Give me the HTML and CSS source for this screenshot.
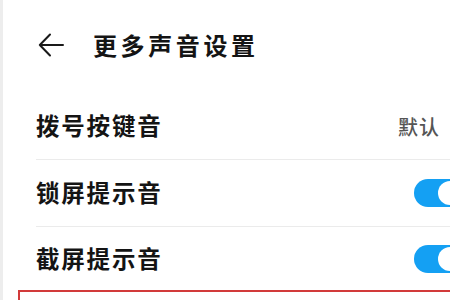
FILE: index.html
```html
<!DOCTYPE html>
<html lang="zh">
<head>
<meta charset="utf-8">
<link rel="stylesheet" href="styles.css">
</head>
<body>
<div class="page">
  <header class="header">
    <svg class="back" viewBox="0 0 26 24" width="26" height="24">
      <path d="M12 1.5 L1.8 12 L12 22.5 M1.8 12 H25" fill="none" stroke="#1a1a1a" stroke-width="2" stroke-linecap="round" stroke-linejoin="round"/>
    </svg>
    <h1 class="title">更多声音设置</h1>
  </header>
  <div class="list">
    <div class="row">
      <span class="label">拨号按键音</span>
      <span class="value">默认</span>
    </div>
    <div class="row">
      <span class="label">锁屏提示音</span>
      <span class="switch"><span class="knob"></span></span>
    </div>
    <div class="row last">
      <span class="label">截屏提示音</span>
      <span class="switch"><span class="knob"></span></span>
    </div>
  </div>
  <div class="highlight"></div>
</div>
</body>
</html>
```
FILE: styles.css
```css
html, body {
  margin: 0;
  padding: 0;
  background: #ffffff;
  overflow: hidden;
}
.page {
  width: 450px;
  height: 300px;
  overflow: hidden;
  border-left: 3px solid #ededed;
  box-sizing: border-box;
  font-family: "Noto Sans CJK SC", "Noto Sans", sans-serif;
  color: #141414;
}
.header {
  height: 93px;
  display: flex;
  align-items: center;
  padding-left: 35px;
  padding-bottom: 4px;
  box-sizing: border-box;
}
.back {
  display: block;
  flex: none;
}
.title {
  margin: 0 0 0 29px;
  font-size: 24px;
  font-weight: 600;
  letter-spacing: 3.6px;
  line-height: 1;
}
.list {
  padding-left: 33px;
}
.row {
  height: 66px;
  display: flex;
  align-items: center;
  justify-content: space-between;
  border-bottom: 1px solid #ebebeb;
}
.row.last {
  border-bottom: none;
  height: 63px;
}
.label {
  font-size: 23.5px;
  font-weight: 700;
  letter-spacing: 1.8px;
  line-height: 1;
}
.value {
  font-size: 20px;
  font-weight: 500;
  color: #555555;
  letter-spacing: 1px;
  margin-right: 10px;
}
.switch {
  width: 36px;
  height: 28px;
  border-radius: 14px 0 0 14px;
  background: #14a0f3;
  display: flex;
  align-items: center;
  padding-left: 24px;
  box-sizing: border-box;
  overflow: hidden;
}
.knob {
  flex: none;
  width: 24px;
  height: 24px;
  border-radius: 50%;
  background: #ffffff;
}
.highlight {
  margin-left: 15px;
  height: 20px;
  border: 2px solid #d23a3a;
  border-right: none;
  border-bottom: none;
}
```
